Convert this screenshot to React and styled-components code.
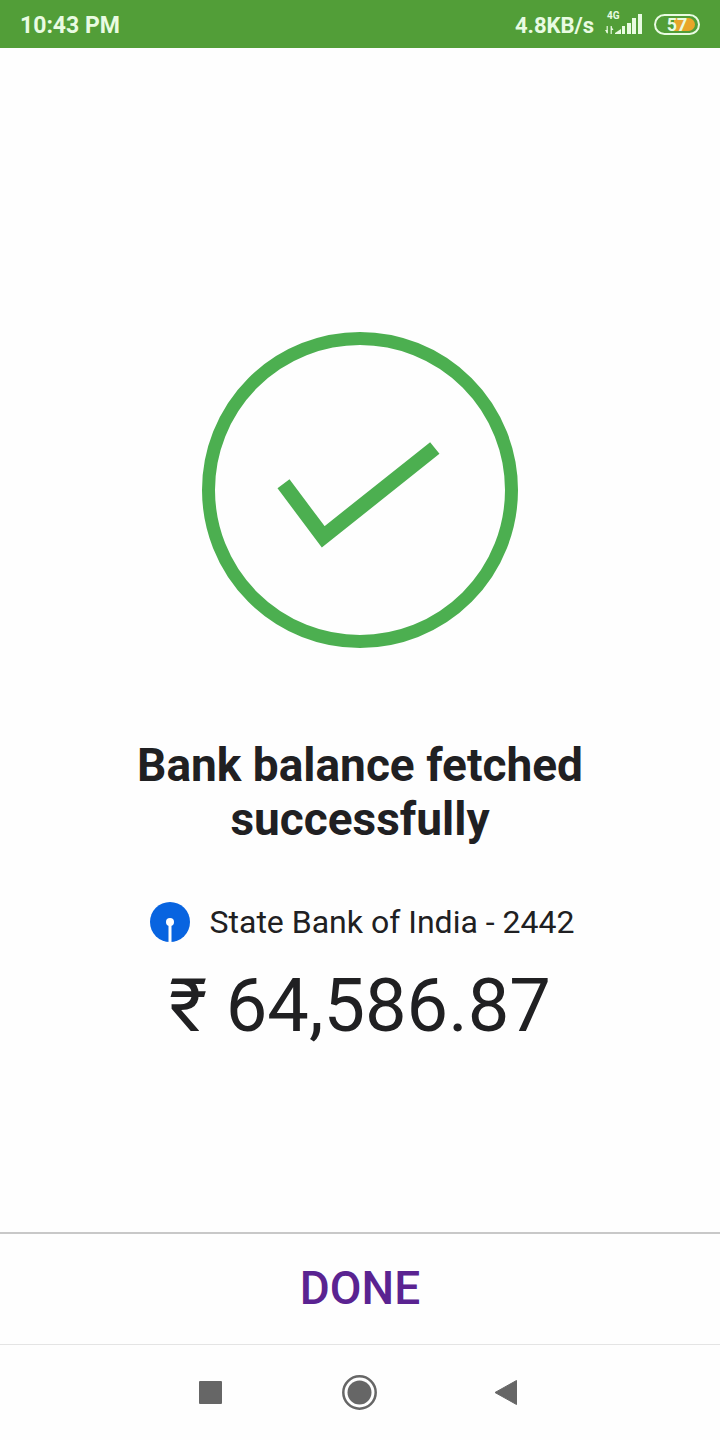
import React from "react";
import styled, { createGlobalStyle } from "styled-components";

const GlobalStyle = createGlobalStyle`
  * { box-sizing: border-box; }
  body { margin: 0; background: #fefefe; color: #202022; font-family: Roboto, "Noto Sans", sans-serif; }
  svg { display: block; flex: none; overflow: visible; }
`;

const Screen = styled.div`
  min-height: 100vh;
  display: flex;
  flex-direction: column;
`;

const StatusBar = styled.header`
  height: 48px;
  padding: 4px 20px 0;
  display: flex;
  align-items: center;
  justify-content: space-between;
  background: #529e38;
  color: #e9fbe2;
  font-size: 23px;
  line-height: 24px;
  font-weight: 700;
`;

const StatusGroup = styled.div`
  display: flex;
  align-items: flex-start;
  gap: 11px;
`;

const NetworkSpeed = styled.span`
  font-size: 22px;
`;

const Battery = styled.span`
  width: 46px;
  height: 21px;
  padding: 2px 3px;
  border: 2px solid currentColor;
  border-radius: 11px;
  display: grid;
  align-items: center;
`;

const BatteryFill = styled.span`
  grid-area: 1 / 1;
  justify-self: end;
  width: 57%;
  height: 13px;
  border-radius: 0 7px 7px 0;
  background: #e9a52a;
`;

const BatteryLevel = styled.span`
  grid-area: 1 / 1;
  z-index: 1;
  font-size: 18px;
  line-height: 13px;
  text-align: center;
`;

const Content = styled.main`
  flex: 1;
  display: flex;
  flex-direction: column;
  align-items: center;
  justify-content: center;
  padding: 102px 100px 0;
`;

const Title = styled.h1`
  margin: 90px 0 56px;
  font-size: 46px;
  line-height: 54px;
  font-weight: 700;
  text-align: center;
`;

const Account = styled.p`
  margin: 0;
  padding-left: 4px;
  display: flex;
  align-items: center;
  gap: 20px;
  font-size: 32px;
  line-height: 40px;
`;

const Balance = styled.p`
  margin: 20px 0 0;
  font-size: 74px;
  line-height: 88px;
`;

const DoneButton = styled.button`
  height: 112px;
  padding: 0 0 2px;
  border: 0;
  border-top: 2px solid #c8c8c8;
  background: #fefefe;
  color: #5a2391;
  font: 500 46px/56px Roboto, sans-serif;
`;

const NavBar = styled.nav`
  height: 96px;
  border-top: 1px solid #e4e4e4;
  display: flex;
  align-items: center;
  justify-content: center;
  gap: 100px;
  color: #666;
`;

const NavButton = styled.button`
  width: 48px;
  height: 48px;
  padding: 0;
  border: 0;
  background: none;
  color: inherit;
`;

function SignalIcon() {
  return (
    <svg width="38" height="22" viewBox="0 0 38 22" fill="currentColor" role="img" aria-label="4G signal">
      <text x="2" y="5" fontSize="10">4G</text>
      <path d="M2.200 12v7M6.200 12v8" stroke="currentColor" strokeWidth="1.200" />
      <path d="M0 16h2.500v4zM6 12l2.500 4H6z" />
      <path d="M10 20v-1l6-4v5zM17 12h3v8h-3zM22 9h4v11h-4zM27 4h4v16h-4zM33 0h4v20h-4z" />
    </svg>
  );
}

function NavIcon({ children }) {
  return (
    <svg width="48" height="48" viewBox="0 0 48 48" fill="currentColor" aria-hidden="true">
      {children}
    </svg>
  );
}

export default function App() {
  return (
    <Screen>
      <GlobalStyle />
      <StatusBar>
        <span>10:43 PM</span>
        <StatusGroup>
          <NetworkSpeed>4.8KB/s</NetworkSpeed>
          <SignalIcon />
          <Battery>
            <BatteryFill />
            <BatteryLevel>57</BatteryLevel>
          </Battery>
        </StatusGroup>
      </StatusBar>
      <Content>
        <svg width="316" height="316" viewBox="0 0 316 316" fill="none" stroke="#4caf50" role="img" aria-label="Success">
          <circle cx="158" cy="158" r="151.5" strokeWidth="13" />
          <path d="M81.500 151.800 121.200 204.800 232.800 116" strokeWidth="15" />
        </svg>
        <Title>Bank balance fetched successfully</Title>
        <Account>
          <svg width="40" height="40" viewBox="0 0 40 40" aria-hidden="true">
            <circle cx="20" cy="20" r="20" fill="#0864e0" />
            <circle cx="20" cy="20" r="4" fill="#fefefe" />
            <path d="M18.500 20h3v20h-3z" fill="#fefefe" />
          </svg>
          State Bank of India - 2442
        </Account>
        <Balance>₹ 64,586.87</Balance>
      </Content>
      <DoneButton type="button">DONE</DoneButton>
      <NavBar>
        <NavButton type="button" aria-label="Recent apps">
          <NavIcon><rect x="11" y="12" width="23" height="23" rx="1" /></NavIcon>
        </NavButton>
        <NavButton type="button" aria-label="Home">
          <NavIcon>
            <circle cx="23.500" cy="23.500" r="16.200" fill="none" stroke="currentColor" strokeWidth="2.500" />
            <circle cx="23.500" cy="23.500" r="12" />
          </NavIcon>
        </NavButton>
        <NavButton type="button" aria-label="Back">
          <NavIcon><path d="M11 23.500 32.500 11.500V35.500z" stroke="currentColor" strokeWidth="1" strokeLinejoin="round" /></NavIcon>
        </NavButton>
      </NavBar>
    </Screen>
  );
}
